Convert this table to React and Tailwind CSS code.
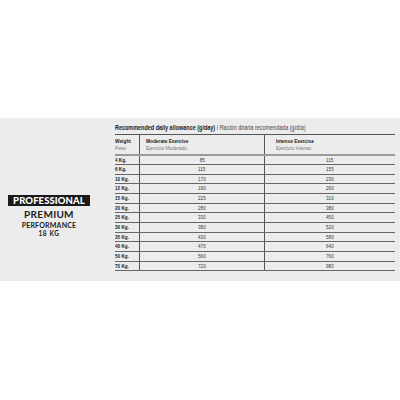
import React from "react";

const rows = [
  ["4 Kg.", "85", "115"],
  ["6 Kg.", "115", "155"],
  ["10 Kg.", "170", "230"],
  ["12 Kg.", "190", "260"],
  ["15 Kg.", "225", "310"],
  ["20 Kg.", "280", "380"],
  ["25 Kg.", "330", "450"],
  ["30 Kg.", "380", "520"],
  ["35 Kg.", "430", "580"],
  ["40 Kg.", "470", "640"],
  ["50 Kg.", "560", "760"],
  ["70 Kg.", "720", "980"],
];

// no condensed face installed, so squeeze the text horizontally
const Narrow = ({ children, className = "" }) => (
  <span className={"inline-block whitespace-nowrap scale-x-[0.8] " + className}>{children}</span>
);

export default function App() {
  return (
    <div className="w-[400px] h-[400px] bg-white pt-[118px] font-['Liberation_Sans',Arial,sans-serif]">
      <div className="h-[163px] bg-[#ececec] flex">
        {/* brand */}
        <div className="w-[115px] pr-[17px] pt-[77px] flex flex-col items-center font-['Lato',sans-serif] text-[#1b1b1b]">
          <div className="bg-[#1a1a1a] text-white font-black text-[9.5px] leading-[11px] px-[5px] tracking-[0.1px]">
            PROFESSIONAL
          </div>
          <div className="font-bold text-[10px] leading-[12px] mt-[2px] tracking-[0.3px]">PREMIUM</div>
          <div className="font-bold text-[7px] leading-[9px] mt-[1px] tracking-[0.2px]">PERFORMANCE</div>
          <div className="font-bold text-[6.5px] leading-[8px] tracking-[0.6px]">18 KG</div>
        </div>

        {/* table */}
        <div className="w-[280px] pt-[5px] text-[#222]">
          <p className="text-[6.5px] leading-[10px] h-[10.5px]">
            <span className="inline-block whitespace-nowrap scale-x-[0.84] origin-left">
              <span className="font-bold">Recommended daily allowance (g/day)</span>
              <span className="text-[#444]"> / Ración diraria recomendada (g/día)</span>
            </span>
          </p>
          <div className="border-t border-[#555]">
            <div className="grid grid-cols-[24px_125px_131px] h-[21px] border-b-2 border-[#9a9a9a] text-[6px] leading-[7px]">
              <div className="pt-[3px]">
                <Narrow className="font-bold origin-left">Weight</Narrow>
                <br />
                <Narrow className="text-[#777] origin-left">Peso</Narrow>
              </div>
              <div className="pt-[3px] pl-[6px] border-l border-[#555]">
                <Narrow className="font-bold origin-left">Moderate Exercise</Narrow>
                <br />
                <Narrow className="text-[#777] origin-left">Ejercicio Moderado</Narrow>
              </div>
              <div className="pt-[3px] pl-[11px] border-l border-[#555]">
                <Narrow className="font-bold origin-left">Intense Exercise</Narrow>
                <br />
                <Narrow className="text-[#777] origin-left">Ejercicio Intenso</Narrow>
              </div>
            </div>
            {rows.map(([w, m, i]) => (
              <div
                key={w}
                className="grid grid-cols-[24px_125px_131px] h-[9.67px] border-b border-[#666] text-[5.8px] leading-[8.6px]"
              >
                <div>
                  <Narrow className="font-bold origin-left">{w}</Narrow>
                </div>
                <div className="text-center border-l border-[#555] text-[#3a3a3a]">
                  <Narrow className="origin-center">{m}</Narrow>
                </div>
                <div className="text-center border-l border-[#555] text-[#3a3a3a]">
                  <Narrow className="origin-center">{i}</Narrow>
                </div>
              </div>
            ))}
          </div>
        </div>
      </div>
    </div>
  );
}
